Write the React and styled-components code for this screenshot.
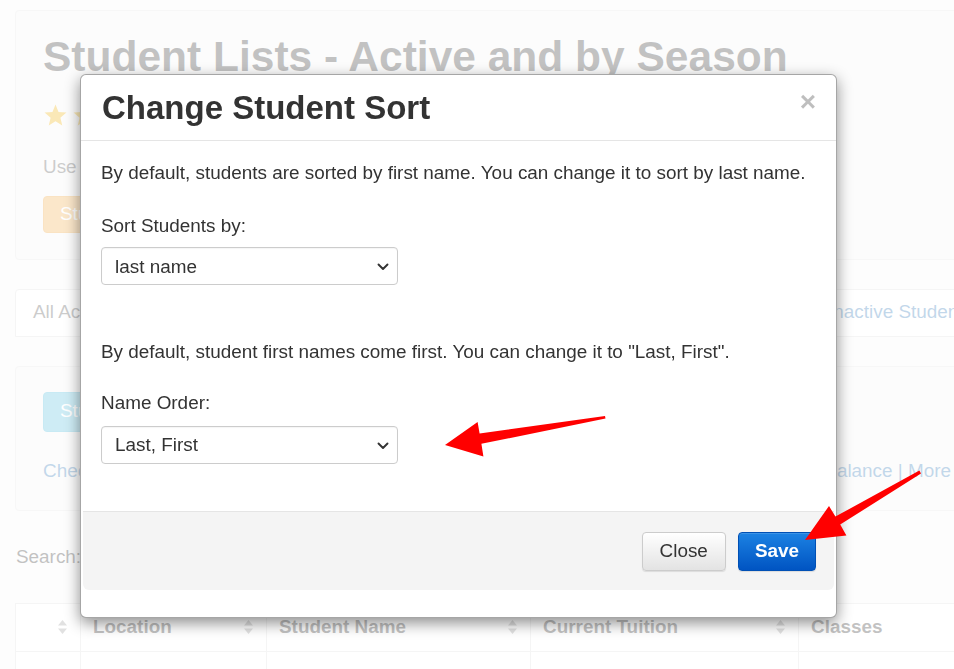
import React from "react";
import styled, { createGlobalStyle } from "styled-components";

const Global = createGlobalStyle`
  html, body { margin: 0; padding: 0; }
  body {
    background: #f7f7f7;
    font-family: "Liberation Sans", Arial, sans-serif;
    font-size: 18.9px;
    line-height: 26.67px;
    color: #333;
    overflow: hidden;
    width: 954px;
    height: 669px;
  }
  * { box-sizing: border-box; }
`;

/* ---------- background page ---------- */
const Page = styled.div`
  width: 1000px;
  padding: 10px 0 0 15px;
`;

const Well = styled.section`
  background: #f5f5f5;
  border: 1px solid #e3e3e3;
  border-radius: 4px;
  padding: 23px 27px 26px;
`;

const PageTitle = styled.h1`
  margin: 0;
  font-size: 42.5px;
  line-height: 46px;
  font-weight: bold;
  color: #333;
  white-space: nowrap;
`;

const Stars = styled.div`
  display: flex;
  gap: 4px;
  margin-top: 23px;
  height: 24px;
`;

const Lead = styled.p`
  margin: 27px 0 0;
  color: #555;
`;

const BgButton = styled.div`
  display: inline-flex;
  align-items: center;
  height: ${(p) => p.$h}px;
  padding: 0 16px;
  margin-top: ${(p) => p.$mt}px;
  border-radius: 4px;
  color: #fff;
  background: ${(p) => p.$bg};
  border: 1px solid ${(p) => p.$bd};
`;

const TabsCard = styled.div`
  margin-top: 29px;
  height: 48px;
  border: 1px solid #ddd;
  border-radius: 4px 4px 0 0;
  background: #fff;
  display: flex;
  align-items: center;
  padding: 0 26px 0 17px;
`;

const Tab = styled.span`
  color: ${(p) => (p.$active ? "#555" : "#337ab7")};
  margin-left: ${(p) => (p.$push ? "auto" : "0")};
`;

const ToolCard = styled.section`
  margin-top: 29px;
  height: 145px;
  background: #f5f5f5;
  border: 1px solid #e3e3e3;
  border-radius: 4px;
  padding: 25px 48px 0 27px;
`;

const LinkRow = styled.div`
  display: flex;
  justify-content: space-between;
  margin-top: 26px;
  color: #337ab7;
`;

const SearchLabel = styled.div`
  margin: 33px 0 0 1px;
  color: #333;
`;

const Table = styled.table`
  margin-top: 33px;
  width: 985px;
  border-collapse: collapse;
  background: #fff;
  border: 1px solid #ddd;
`;

const Th = styled.th`
  height: 48px;
  padding: 0 12px;
  text-align: left;
  font-weight: bold;
  color: #333;
  border-right: 1px solid #ddd;
  border-bottom: 1px solid #ddd;
  width: ${(p) => p.$w}px;
`;

const ThInner = styled.div`
  display: flex;
  align-items: center;
  justify-content: space-between;
  white-space: nowrap;
  margin-top: -2px;
`;

const Td = styled.td`
  height: 40px;
  padding: 12px 12px 0;
  vertical-align: top;
  color: ${(p) => (p.$link ? "#337ab7" : "#333")};
  border-right: 1px solid #ddd;
`;

const SortIcon = () => (
  <svg width="11" height="16" viewBox="0 0 11 16">
    <path d="M5.5 1 L10 6.5 H1 Z" fill="#999" />
    <path d="M5.5 15 L10 9.5 H1 Z" fill="#999" />
  </svg>
);

const Star = () => (
  <svg width="25" height="25" viewBox="0 0 24 24">
    <path
      d="M12 1.5 L14.9 8.6 L22.5 9.2 L16.7 14.1 L18.5 21.6 L12 17.6 L5.5 21.6 L7.3 14.1 L1.5 9.2 L9.1 8.6 Z"
      fill="#efb30f"
    />
  </svg>
);

/* ---------- modal ---------- */
const Backdrop = styled.div`
  position: fixed;
  inset: 0;
  background: rgba(255, 255, 255, 0.7);
`;

const Dialog = styled.div`
  position: fixed;
  left: 80px;
  top: 74px;
  width: 757px;
  background: #fff;
  border: 1px solid rgba(0, 0, 0, 0.35);
  border-radius: 6px;
  box-shadow: 0 5px 15px rgba(0, 0, 0, 0.45);
  padding-bottom: 27px;
`;

const Header = styled.div`
  height: 66px;
  border-bottom: 1px solid #e5e5e5;
  padding: 0 20px 0 21px;
  display: flex;
  justify-content: space-between;
  align-items: center;
`;

const Title = styled.h3`
  margin: 0;
  font-size: 33px;
  line-height: 36px;
  font-weight: bold;
  color: #333;
`;

const CloseX = styled.button`
  align-self: flex-start;
  margin-top: 13px;
  padding: 0;
  border: 0;
  background: none;
  font-family: "Liberation Sans", Arial, sans-serif;
  font-size: 28px;
  line-height: 28px;
  font-weight: bold;
  color: #000;
  opacity: 0.25;
`;

const Body = styled.div`
  padding: 19px 20px 47px;
`;

const Para = styled.p`
  margin: ${(p) => p.$mt}px 0 0;
  white-space: nowrap;
`;

const Label = styled.label`
  display: block;
  margin-top: ${(p) => p.$mt}px;
`;

const SelectWrap = styled.div`
  position: relative;
  width: 297px;
  height: 38px;
  margin-top: ${(p) => p.$mt}px;
`;

const Select = styled.select`
  appearance: none;
  -webkit-appearance: none;
  width: 100%;
  height: 38px;
  padding: 0 30px 0 13px;
  border: 1px solid #ccc;
  border-radius: 4px;
  background: #fff;
  font-family: "Liberation Sans", Arial, sans-serif;
  font-size: 18.9px;
  color: #333;
  box-shadow: inset 0 1px 1px rgba(0, 0, 0, 0.04);
`;

const Chevron = styled.svg`
  position: absolute;
  right: 9px;
  top: 16px;
  pointer-events: none;
`;

const Footer = styled.div`
  margin: 0 2px;
  background: #f4f4f4;
  border-top: 1px solid #e5e5e5;
  border-radius: 0 0 6px 6px;
  padding: 20px 18px 19px;
  display: flex;
  justify-content: flex-end;
  gap: 12px;
`;

const Btn = styled.button`
  height: 39px;
  padding: 0 ${(p) => (p.$primary ? 16 : 17)}px;
  border-radius: 4px;
  font-family: "Liberation Sans", Arial, sans-serif;
  font-size: 18.9px;
  font-weight: ${(p) => (p.$primary ? "bold" : "normal")};
  color: ${(p) => (p.$primary ? "#fff" : "#333")};
  border: 1px solid ${(p) => (p.$primary ? "#0050b5" : "#ccc")};
  background: ${(p) =>
    p.$primary
      ? "linear-gradient(#1c82e3, #0054c2)"
      : "linear-gradient(#ffffff, #e3e3e3)"};
  box-shadow: inset 0 1px 0 rgba(255, 255, 255, 0.15), 0 1px 1px rgba(0, 0, 0, 0.1);
`;

const Arrows = styled.svg`
  position: fixed;
  left: 0;
  top: 0;
  pointer-events: none;
`;

const Dropdown = ({ mt, value, options }) => (
  <SelectWrap $mt={mt}>
    <Select defaultValue={value}>
      {options.map((o) => (
        <option key={o} value={o}>
          {o}
        </option>
      ))}
    </Select>
    <Chevron width="12" height="8" viewBox="0 0 12 8">
      <path d="M1.5 1.5 L6 6 L10.5 1.5" fill="none" stroke="#333" strokeWidth="1.9" strokeLinecap="round" strokeLinejoin="round" />
    </Chevron>
  </SelectWrap>
);

export default function App() {
  return (
    <>
      <Global />
      <Page>
        <Well>
          <PageTitle>Student Lists - Active and by Season</PageTitle>
          <Stars>
            {[0, 1, 2, 3, 4].map((i) => (
              <Star key={i} />
            ))}
          </Stars>
          <Lead>Use these lists to view your students.</Lead>
          <BgButton $h={37} $mt={15} $bg="#f0ad4e" $bd="#eea236">
            Student Sort
          </BgButton>
        </Well>
        <TabsCard>
          <Tab $active>All Active Students</Tab>
          <Tab $push>Inactive Students</Tab>
        </TabsCard>
        <ToolCard>
          <BgButton $h={40} $mt={0} $bg="#5bc0de" $bd="#46b8da">
            Student Options
          </BgButton>
          <LinkRow>
            <span>Check Attendance</span>
            <span>Outstanding Balance | More</span>
          </LinkRow>
        </ToolCard>
        <SearchLabel>Search:</SearchLabel>
        <Table>
          <thead>
            <tr>
              <Th $w={65}>
                <ThInner>
                  <span />
                  <SortIcon />
                </ThInner>
              </Th>
              <Th $w={186}>
                <ThInner>
                  Location <SortIcon />
                </ThInner>
              </Th>
              <Th $w={264}>
                <ThInner>
                  Student Name <SortIcon />
                </ThInner>
              </Th>
              <Th $w={268}>
                <ThInner>
                  Current Tuition <SortIcon />
                </ThInner>
              </Th>
              <Th>
                <ThInner>
                  Classes <SortIcon />
                </ThInner>
              </Th>
            </tr>
          </thead>
          <tbody>
            <tr>
              <Td />
              <Td>Main</Td>
              <Td $link>Jackson Collins</Td>
              <Td $link>$ 0.00</Td>
              <Td />
            </tr>
          </tbody>
        </Table>
      </Page>

      <Backdrop />
      <Dialog role="dialog">
        <Header>
          <Title>Change Student Sort</Title>
          <CloseX aria-label="Close">×</CloseX>
        </Header>
        <Body>
          <Para $mt={0}>
            By default, students are sorted by first name. You can change it to sort by last name.
          </Para>
          <Label $mt={26}>Sort Students by:</Label>
          <Dropdown mt={8} value="last name" options={["first name", "last name"]} />
          <Para $mt={54}>
            By default, student first names come first. You can change it to "Last, First".
          </Para>
          <Label $mt={24}>Name Order:</Label>
          <Dropdown mt={9} value="Last, First" options={["First Last", "Last, First"]} />
        </Body>
        <Footer>
          <Btn>Close</Btn>
          <Btn $primary>Save</Btn>
        </Footer>
      </Dialog>

      <Arrows width="954" height="669" viewBox="0 0 954 669">
        <polygon
          points="445,445 477.6,422 479.6,433.6 605,416 605.5,418.6 481.4,443.8 483.4,456.5"
          fill="#f00"
        />
        <polygon
          points="805,540 829,506 835.4,516.6 919.4,470.6 921,473.4 840.2,524.6 846.4,535.5"
          fill="#f00"
        />
      </Arrows>
    </>
  );
}
